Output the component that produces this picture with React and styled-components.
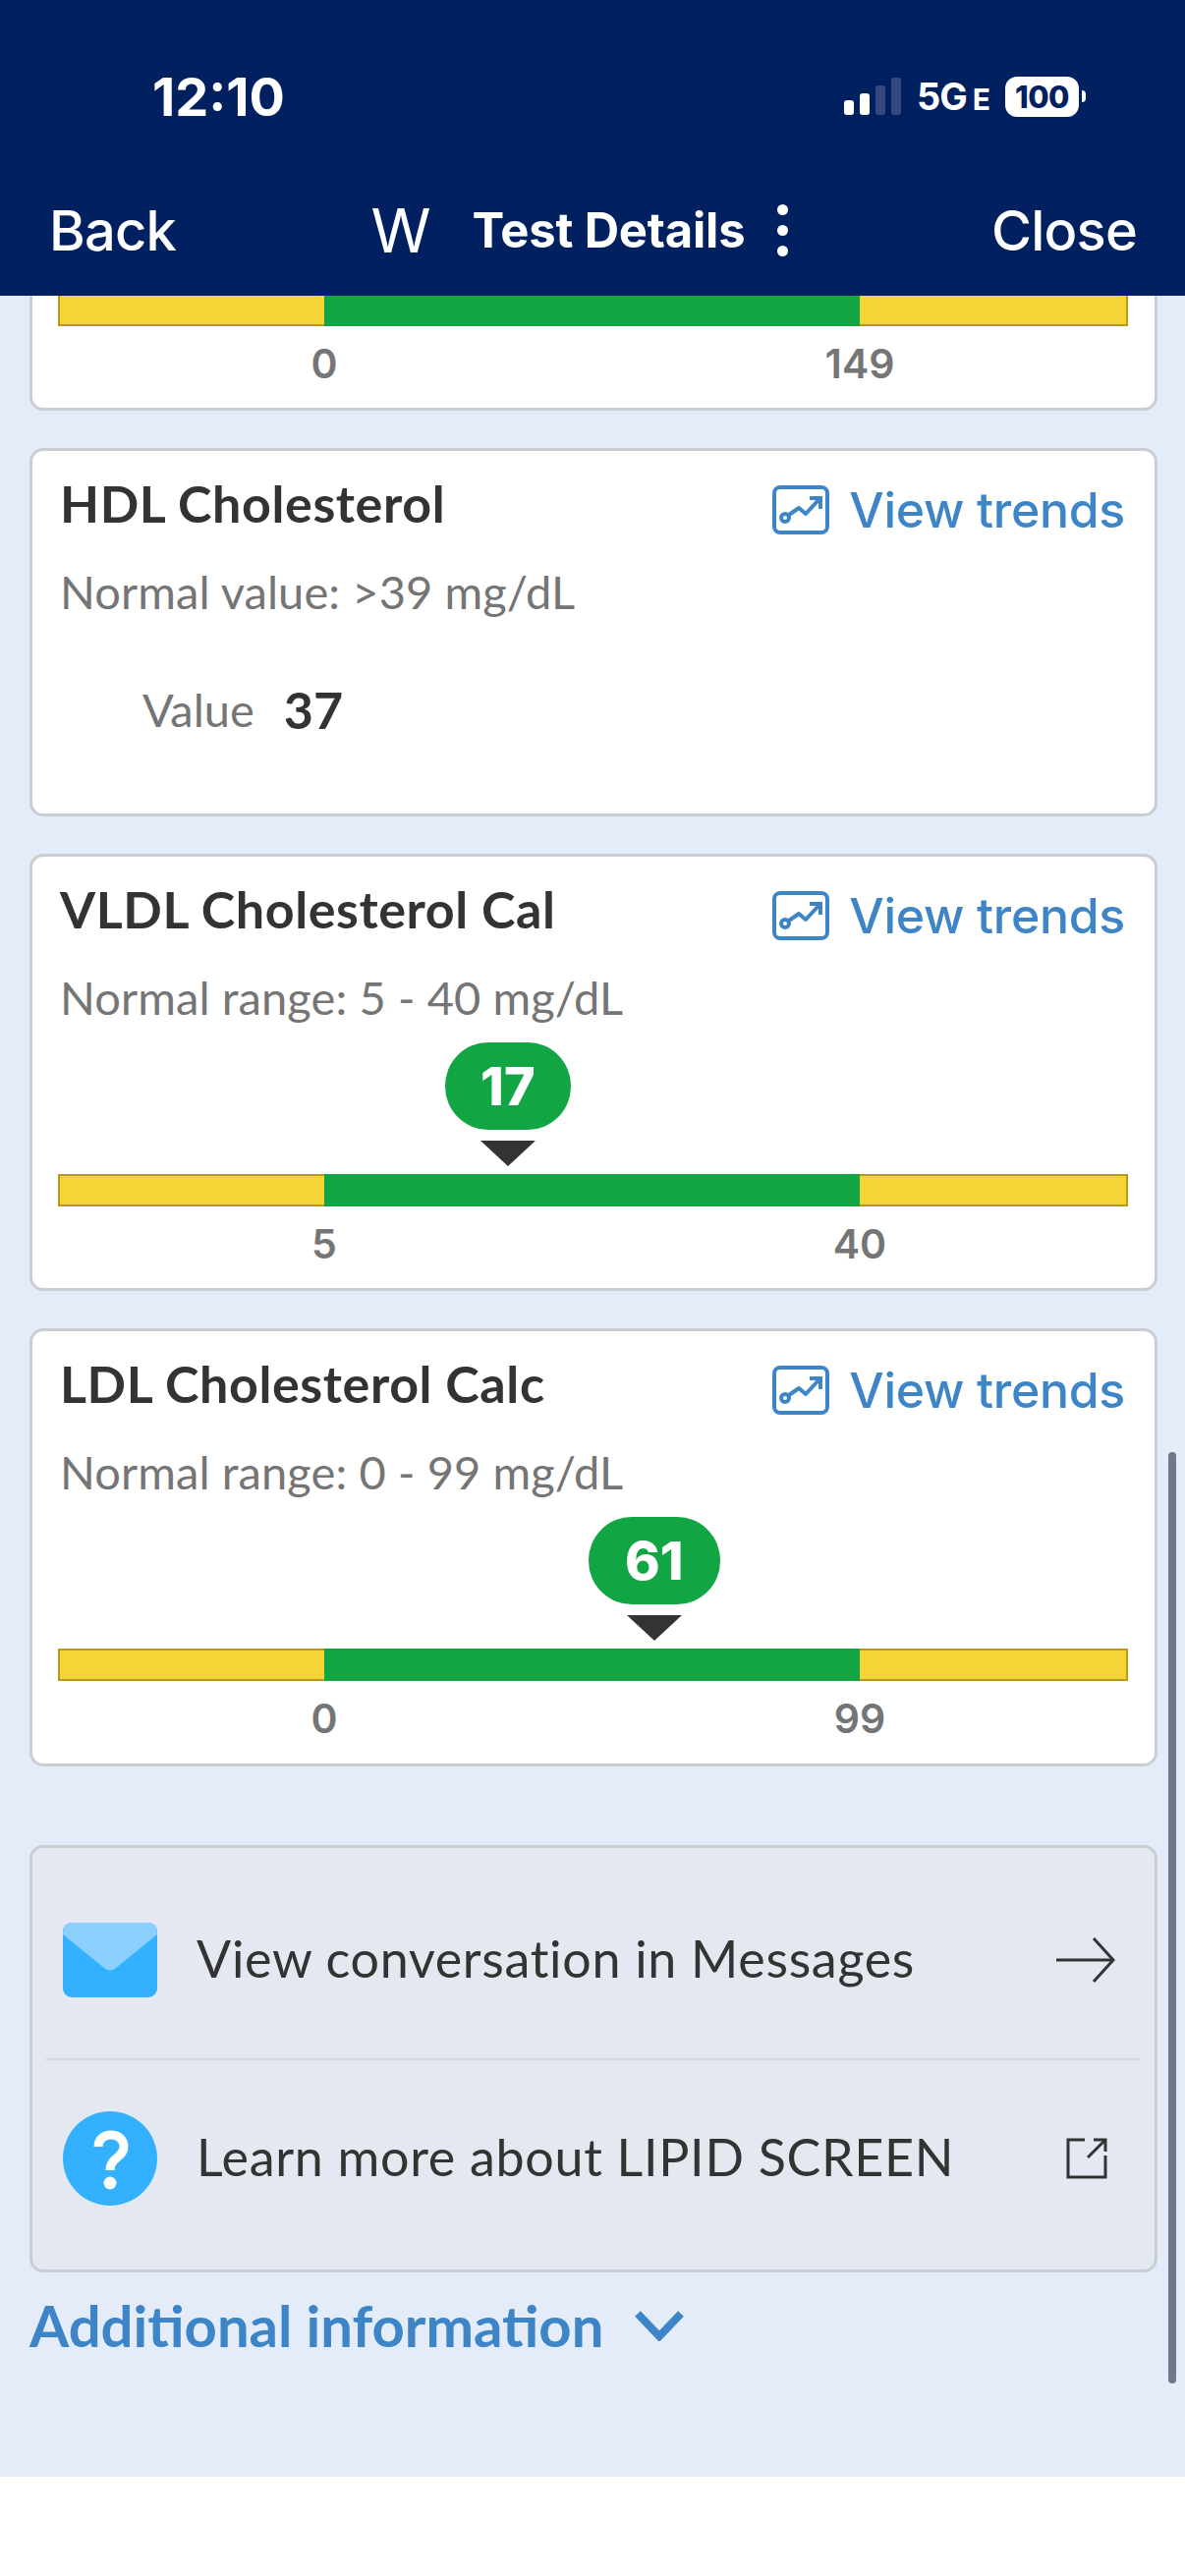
import React from 'react'
import styled, { createGlobalStyle } from 'styled-components'

const NAVY = '#012060'
const BLUE = '#3d85c6'
const DARK = '#333333'
const GRAY = '#757575'
const SKY = '#33b1ff'

const GlobalStyle = createGlobalStyle`
  html, body {
    margin: 0;
    padding: 0;
    background: #ffffff;
  }
  body {
    font-family: "Lato", "Liberation Sans", sans-serif;
  }
`

const Screen = styled.div`
  position: relative;
  width: 1206px;
  height: 2622px;
  overflow: hidden;
  display: flex;
  flex-direction: column;
  background: #ffffff;
`

const Header = styled.header`
  height: 301px;
  flex: none;
  background: ${NAVY};
  color: #ffffff;
  font-family: "Inter", sans-serif;
  display: flex;
  flex-direction: column;
`

const StatusBar = styled.div`
  height: 100px;
  margin-top: 48px;
  padding: 0 101px 0 155px;
  display: flex;
  align-items: center;
  justify-content: space-between;
`

const Clock = styled.span`
  font-size: 54px;
  font-weight: 700;
`

const StatusIcons = styled.div`
  display: flex;
  align-items: center;
  font-weight: 700;
`

const Network = styled.span`
  margin-left: 16px;
  font-size: 38px;
  letter-spacing: -1px;
  line-height: 1;
`

const NetworkSuffix = styled.span`
  margin-left: 6px;
  font-size: 30px;
`

const Battery = styled.span`
  margin-left: 16px;
  width: 75px;
  height: 41px;
  border-radius: 12px;
  background: #ffffff;
  color: ${NAVY};
  font-size: 31px;
  font-weight: 800;
  letter-spacing: -0.5px;
  display: flex;
  align-items: center;
  justify-content: center;
`

const BatteryTip = styled.span`
  margin-left: 3px;
  width: 4px;
  height: 12px;
  border-radius: 0 4px 4px 0;
  background: #ffffff;
`

const NavBar = styled.nav`
  flex: 1;
  padding: 20px 49px 0 50px;
  display: flex;
  align-items: center;
  justify-content: space-between;
`

const NavLink = styled.span`
  font-size: 56px;
  font-weight: 500;
  letter-spacing: -0.8px;
`

const NavCenter = styled.div`
  display: flex;
  align-items: center;
  margin-left: -8px;
`

const NavLogo = styled.span`
  font-size: 62px;
  font-weight: 400;
  margin-right: 42px;
`

const NavTitle = styled.span`
  font-size: 49px;
  font-weight: 700;
  letter-spacing: -0.2px;
`

const Kebab = styled.span`
  margin-left: 33px;
  display: flex;
  flex-direction: column;
  gap: 10px;
  span {
    width: 11px;
    height: 11px;
    border-radius: 50%;
    background: #ffffff;
  }
`

const Content = styled.main`
  height: 2220px;
  flex: none;
  background: #e4ecf9;
  padding: 0 28px 0 30px;
  box-sizing: border-box;
  display: flex;
  flex-direction: column;
`

const Card = styled.section`
  box-sizing: border-box;
  background: #ffffff;
  border: 3px solid #cacdd2;
  border-radius: 14px;
  margin-bottom: 38px;
  padding: 0 27px 0 26px;
  height: ${(p) => p.$height}px;
  ${(p) => p.$clipped && 'border-top: none; border-radius: 0 0 14px 14px;'}
`

const CardHead = styled.div`
  display: flex;
  justify-content: space-between;
  align-items: flex-start;
  height: 92px;
  margin-top: 20px;
`

const CardTitle = styled.h2`
  margin: 0;
  font-size: 52px;
  line-height: 66px;
  font-weight: 700;
  color: ${DARK};
  letter-spacing: 0.6px;
  padding-left: 2px;
`

const TrendsLink = styled.a`
  margin-top: 7px;
  display: flex;
  align-items: center;
  gap: 20px;
  color: ${BLUE};
  font-family: "Inter", sans-serif;
  font-size: 50px;
  font-weight: 500;
  line-height: 66px;
  letter-spacing: -0.3px;
  margin-right: 3px;
`

const RangeNote = styled.p`
  margin: 0;
  padding-left: 2px;
  height: 62px;
  font-size: 47px;
  line-height: 62px;
  letter-spacing: 0.1px;
  color: ${GRAY};
`

const ValueRow = styled.div`
  margin-top: 58px;
  padding-left: 86px;
  display: flex;
  align-items: center;
  gap: 30px;
  line-height: 62px;
`

const ValueLabel = styled.span`
  font-size: 47px;
  color: ${GRAY};
`

const ValueNumber = styled.span`
  font-size: 52px;
  font-weight: 700;
  color: ${DARK};
`

const Marker = styled.div`
  width: 160px;
  margin-top: 15px;
  display: flex;
  flex-direction: column;
  align-items: center;
`

const Pill = styled.div`
  height: 89px;
  padding: 0 ${(p) => p.$pad}px;
  border-radius: 44px;
  background: #12a544;
  color: #ffffff;
  font-family: "Inter", sans-serif;
  font-size: 54px;
  font-weight: 800;
  display: flex;
  align-items: center;
  justify-content: center;
`

const Pointer = styled.div`
  margin-top: 11px;
  width: 0;
  height: 0;
  border-left: 28px solid transparent;
  border-right: 28px solid transparent;
  border-top: 26px solid ${DARK};
`

const Bar = styled.div`
  margin-top: ${(p) => p.$top}px;
  height: ${(p) => p.$height}px;
  display: grid;
  grid-template-columns: 271fr 545fr 273fr;
`

const Segment = styled.div`
  background: ${(p) => (p.$ok ? '#12a544' : '#f5d535')};
  border: 2px solid ${(p) => (p.$ok ? '#12a544' : '#b89a16')};
  ${(p) => p.$open && 'border-top: none;'}
  ${(p) => p.$side === 'left' && 'border-right: none;'}
  ${(p) => p.$side === 'right' && 'border-left: none;'}
`

const Ticks = styled.div`
  margin-top: 14px;
  padding-left: 211px;
  display: flex;
  gap: 425px;
`

const Tick = styled.span`
  width: 120px;
  text-align: center;
  font-family: "Inter", sans-serif;
  font-size: 41px;
  font-weight: 600;
  line-height: 48px;
  color: ${GRAY};
`

const LinksPanel = styled.section`
  box-sizing: border-box;
  margin-top: 42px;
  height: 435px;
  background: #e4e8f0;
  border: 3px solid #cacdd2;
  border-radius: 14px;
  padding: 14px 15px 12px 13px;
  display: flex;
  flex-direction: column;
`

const LinkRow = styled.a`
  flex: none;
  height: ${(p) => p.$height}px;
  padding: 0 ${(p) => p.$endPad}px 0 18px;
  display: flex;
  align-items: center;
  color: ${DARK};
  font-size: 52px;
  ${(p) => p.$divided && 'border-bottom: 2px solid #d6d9dd;'}
`

const LinkIcon = styled.span`
  flex: none;
  width: 96px;
  display: flex;
`

const LinkLabel = styled.span`
  flex: 1;
  margin: 0 0 4px 40px;
  font-weight: 400;
  letter-spacing: 0.7px;
`

const Disclosure = styled.a`
  margin-top: 21px;
  display: flex;
  align-items: center;
  gap: 32px;
  color: ${BLUE};
  font-size: 58px;
  font-weight: 700;
  line-height: 66px;
`

const ScrollThumb = styled.div`
  position: absolute;
  top: 1478px;
  right: 9px;
  width: 8px;
  height: 948px;
  border-radius: 4px;
  background: #6f7888;
`

function TrendIcon() {
  return (
    <svg width="58" height="50" viewBox="0 0 58 50" fill="none" stroke={BLUE} strokeWidth="4">
      <rect x="2" y="2" width="54" height="46" rx="6" />
      <circle cx="13" cy="33" r="4" />
      <path d="M17 30 L27 23 L34 29 L47 15" strokeLinejoin="round" />
      <path d="M38 13 H49 V24" />
    </svg>
  )
}

function MailIcon() {
  return (
    <svg width="96" height="76" viewBox="0 0 96 76">
      <rect width="96" height="76" rx="9" fill={SKY} />
      <path d="M0 12 Q0 0 9 0 H87 Q96 0 96 12 L54 46 Q48 51 42 46 Z" fill="#8bd0ff" />
    </svg>
  )
}

function HelpIcon() {
  return (
    <svg width="96" height="96" viewBox="0 0 96 96">
      <circle cx="48" cy="48" r="48" fill={SKY} />
      <path d="M36 36 C36 20 62 20 62 36 C62 47 48 47 48 60" fill="none" stroke="#ffffff" strokeWidth="9" />
      <circle cx="48" cy="73" r="6.5" fill="#ffffff" />
    </svg>
  )
}

function ArrowIcon() {
  return (
    <svg width="60" height="46" viewBox="0 0 60 46" fill="none" stroke={DARK} strokeWidth="3">
      <path d="M0 23 H58" />
      <path d="M38 1 L58 23 L38 45" />
    </svg>
  )
}

function ExternalIcon() {
  return (
    <svg width="42" height="42" viewBox="0 0 42 42" fill="none" stroke={DARK} strokeWidth="3">
      <path d="M19 2 H2 V40 H40 V18" />
      <path d="M22 20 L39 3" />
      <path d="M28 2 H40 V14" />
    </svg>
  )
}

function ChevronIcon() {
  return (
    <svg width="50" height="32" viewBox="0 0 50 32" fill="none" stroke={BLUE} strokeWidth="8">
      <path d="M3 4 L25 27 L47 4" />
    </svg>
  )
}

function SignalIcon() {
  return (
    <svg width="58" height="38" viewBox="0 0 58 38">
      <rect x="0" y="23" width="10" height="15" rx="3" fill="#ffffff" />
      <rect x="16" y="16" width="10" height="22" rx="3" fill="#ffffff" />
      <rect x="32" y="8" width="10" height="30" rx="3" fill="#34497f" />
      <rect x="48" y="0" width="10" height="38" rx="3" fill="#34497f" />
    </svg>
  )
}

// Bar columns in px, the green part sits between low and high
const GREEN_START = 271
const GREEN_WIDTH = 545
const MARKER_WIDTH = 160

function RangeBar({ open, height, top }) {
  return (
    <Bar $height={height} $top={top}>
      <Segment $side="left" $open={open} />
      <Segment $ok $open={open} />
      <Segment $side="right" $open={open} />
    </Bar>
  )
}

function RangeCard({ title, unit, low, high, value, pad, height }) {
  const share = (value - low) / (high - low)
  const offset = GREEN_START + share * GREEN_WIDTH - MARKER_WIDTH / 2
  return (
    <Card $height={height}>
      <CardHead>
        <CardTitle>{title}</CardTitle>
        <TrendsLink>
          <TrendIcon />
          View trends
        </TrendsLink>
      </CardHead>
      <RangeNote>
        Normal range: {low} - {high} {unit}
      </RangeNote>
      <Marker style={{ marginLeft: offset }}>
        <Pill $pad={pad}>{value}</Pill>
        <Pointer />
      </Marker>
      <RangeBar top={8} height={33} />
      <Ticks>
        <Tick>{low}</Tick>
        <Tick>{high}</Tick>
      </Ticks>
    </Card>
  )
}

export default function App() {
  return (
    <Screen>
      <GlobalStyle />
      <Header>
        <StatusBar>
          <Clock>12:10</Clock>
          <StatusIcons>
            <SignalIcon />
            <Network>
              5G<NetworkSuffix>E</NetworkSuffix>
            </Network>
            <Battery>100</Battery>
            <BatteryTip />
          </StatusIcons>
        </StatusBar>
        <NavBar>
          <NavLink>Back</NavLink>
          <NavCenter>
            <NavLogo>W</NavLogo>
            <NavTitle>Test Details</NavTitle>
            <Kebab>
              <span />
              <span />
              <span />
            </Kebab>
          </NavCenter>
          <NavLink>Close</NavLink>
        </NavBar>
      </Header>
      <Content>
        <Card $clipped $height={117}>
          <RangeBar open top={0} height={31} />
          <Ticks>
            <Tick>0</Tick>
            <Tick>149</Tick>
          </Ticks>
        </Card>
        <Card $height={375}>
          <CardHead>
            <CardTitle>HDL Cholesterol</CardTitle>
            <TrendsLink>
              <TrendIcon />
              View trends
            </TrendsLink>
          </CardHead>
          <RangeNote>Normal value: &gt;39 mg/dL</RangeNote>
          <ValueRow>
            <ValueLabel>Value</ValueLabel>
            <ValueNumber>37</ValueNumber>
          </ValueRow>
        </Card>
        <RangeCard title="VLDL Cholesterol Cal" unit="mg/dL" low={5} high={40} value={17} pad={36} height={445} />
        <RangeCard title="LDL Cholesterol Calc" unit="mg/dL" low={0} high={99} value={61} pad={37} height={446} />
        <LinksPanel>
          <LinkRow $divided $height={200} $endPad={25}>
            <LinkIcon>
              <MailIcon />
            </LinkIcon>
            <LinkLabel>View conversation in Messages</LinkLabel>
            <ArrowIcon />
          </LinkRow>
          <LinkRow $height={200} $endPad={33}>
            <LinkIcon>
              <HelpIcon />
            </LinkIcon>
            <LinkLabel>Learn more about LIPID SCREEN</LinkLabel>
            <ExternalIcon />
          </LinkRow>
        </LinksPanel>
        <Disclosure>
          Additional information
          <ChevronIcon />
        </Disclosure>
      </Content>
      <ScrollThumb />
    </Screen>
  )
}
